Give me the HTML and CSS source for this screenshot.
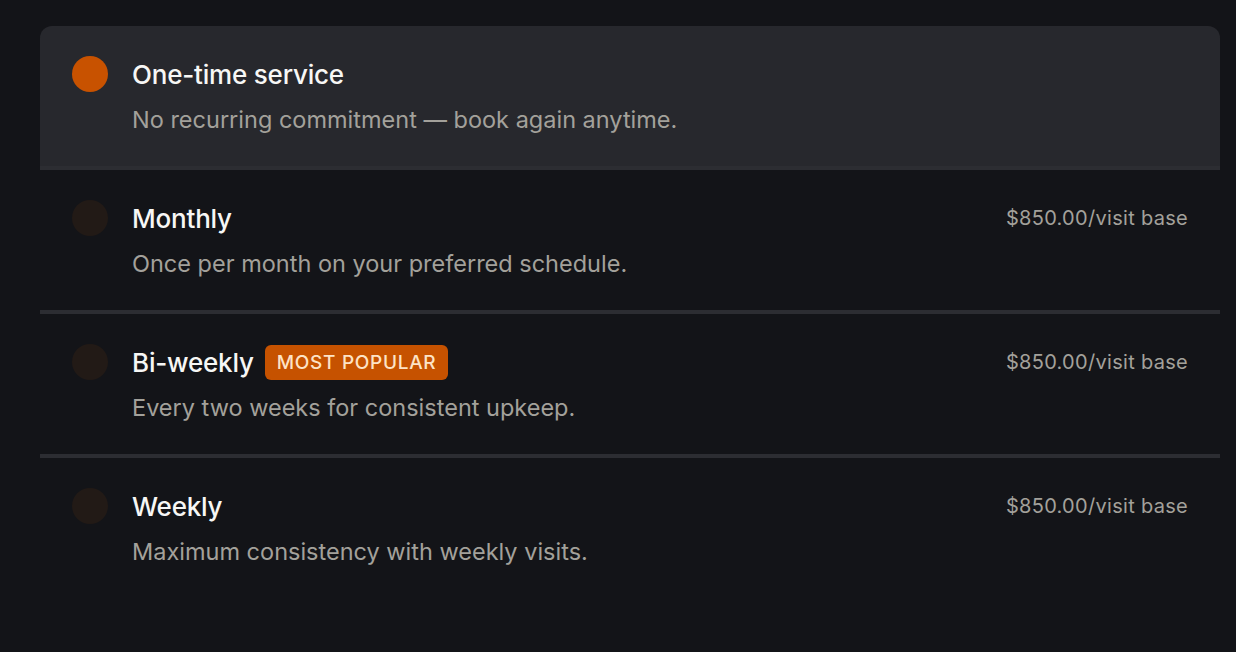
FILE: index.html
```html
<!DOCTYPE html>
<html lang="en">
<head>
    <meta charset="UTF-8">
    <meta name="viewport" content="width=device-width, initial-scale=1.0">
    <title>Service Frequency</title>
    <link rel="stylesheet" href="styles.css">
</head>
<body>
    <div class="plan-list">
        <label class="plan selected">
            <span class="radio"></span>
            <div class="plan-text">
                <div class="plan-head">
                    <span class="plan-title">One-time service</span>
                </div>
                <p class="plan-desc">No recurring commitment — book again anytime.</p>
            </div>
        </label>

        <label class="plan">
            <span class="radio"></span>
            <div class="plan-text">
                <div class="plan-head">
                    <span class="plan-title">Monthly</span>
                    <span class="plan-price">$850.00/visit base</span>
                </div>
                <p class="plan-desc">Once per month on your preferred schedule.</p>
            </div>
        </label>

        <label class="plan">
            <span class="radio"></span>
            <div class="plan-text">
                <div class="plan-head">
                    <span class="plan-title">Bi-weekly</span>
                    <span class="badge">Most popular</span>
                    <span class="plan-price">$850.00/visit base</span>
                </div>
                <p class="plan-desc">Every two weeks for consistent upkeep.</p>
            </div>
        </label>

        <label class="plan">
            <span class="radio"></span>
            <div class="plan-text">
                <div class="plan-head">
                    <span class="plan-title">Weekly</span>
                    <span class="plan-price">$850.00/visit base</span>
                </div>
                <p class="plan-desc">Maximum consistency with weekly visits.</p>
            </div>
        </label>
    </div>
</body>
</html>
```

FILE: styles.css
```css
body {
    margin: 0;
    padding: 26px 16px 0 40px;
    background-color: #131418;
    font-family: Inter, "Noto Sans", sans-serif;
    color: #f5f5f4;
}

.plan-list {
    width: 1180px;
}

.plan {
    display: flex;
    gap: 24px;
    height: 140px;
    box-sizing: content-box;
    padding: 0 32px;
    border-bottom: 4px solid #2c2d32;
    cursor: pointer;
}
.plan:last-child {
    border-bottom-color: transparent;
}
.plan.selected {
    background-color: #27282d;
    border-radius: 12px 12px 0 0;
}

.radio {
    flex: none;
    width: 36px;
    height: 36px;
    margin-top: 30px;
    border-radius: 50%;
    background-color: #221a16;
}
.plan.selected .radio {
    background-color: #c85200;
}

.plan-text {
    flex: 1;
    padding-top: 30px;
}

.plan-head {
    display: flex;
    align-items: center;
    height: 36px;
}

.plan-title {
    font-size: 26px;
    font-weight: 500;
    letter-spacing: -0.2px;
    color: #f7f7f5;
}

.badge {
    margin-left: 11px;
    padding: 0 12px;
    height: 35px;
    line-height: 35px;
    border-radius: 6px;
    background-color: #c65200;
    color: #fde3c6;
    font-size: 19px;
    font-weight: 500;
    letter-spacing: 0.7px;
    text-transform: uppercase;
}

.plan-price {
    margin-left: auto;
    font-size: 20px;
    letter-spacing: 0.3px;
    color: #a3a19b;
}

.plan-desc {
    margin: 12px 0 0;
    line-height: 32px;
    font-size: 23.5px;
    color: #a3a19b;
}
```
